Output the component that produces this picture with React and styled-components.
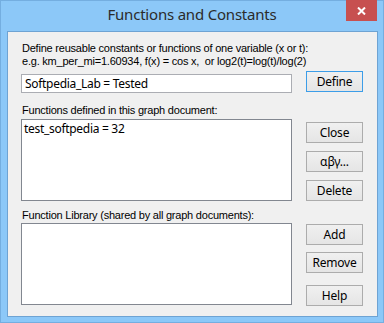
import React from 'react';
import styled, { createGlobalStyle } from 'styled-components';

const GlobalStyle = createGlobalStyle`
    html, body { margin: 0; padding: 0; background: #ffffff; }
    * { box-sizing: border-box; }
`;

const Window = styled.div`
    width: 384px;
    height: 323px;
    display: flex;
    flex-direction: column;
    background: #8cc8f8;
    box-shadow: inset 0 0 0 1px #74aee0;
    font-family: "Liberation Sans", Arial, sans-serif;
`;

const TitleBar = styled.div`
    height: 31px;
    display: grid;
    grid-template-columns: 1fr auto 1fr;
    align-items: start;
    flex-shrink: 0;
`;

const Title = styled.div`
    grid-column: 2;
    margin-top: 4px;
    font-family: "Noto Sans", "Open Sans", sans-serif;
    font-size: 15px;
    line-height: 20px;
    letter-spacing: -0.2px;
    color: #2b2b2b;
    white-space: nowrap;
`;

const CloseButton = styled.div`
    grid-column: 3;
    justify-self: end;
    width: 31px;
    height: 21px;
    margin-right: 7px;
    background: #c75050;
    display: grid;
    place-items: center;
`;

const Client = styled.div`
    flex: 1;
    margin: 0 6px 6px 7px;
    border: 1px solid #6ea3d3;
    background: #f0f0f0;
    padding: 10px 13px 0 13px;
    display: flex;
    flex-direction: column;
`;

const Label = styled.div`
    font-size: 11px;
    line-height: 13px;
    letter-spacing: -0.22px;
    color: #000;
    padding-left: 1px;
    margin-top: ${ props => props.top || 0 }px;
    white-space: nowrap;
`;

const Row = styled.div`
    display: grid;
    grid-template-columns: 271px 57px;
    column-gap: 14px;
    align-items: start;
    margin-top: ${ props => props.top || 0 }px;
`;

const Input = styled.div`
    margin-top: 3px;
    height: 19px;
    border: 1px solid #abadb3;
    background: #fff;
    padding: 0 3px;
    font-family: "Noto Sans", "Open Sans", sans-serif;
    font-size: 12px;
    line-height: 17px;
    letter-spacing: -0.3px;
    color: #000;
`;

const ListBox = styled.div`
    height: 82px;
    border: 1px solid #828790;
    background: #fff;
    padding: 1px 2px;
    font-family: "Noto Sans", "Open Sans", sans-serif;
    font-size: 12px;
    line-height: 16px;
    letter-spacing: -0.3px;
    color: #000;
`;

const ButtonColumn = styled.div`
    display: flex;
    flex-direction: column;
`;

const Button = styled.div`
    height: 21px;
    margin-top: ${ props => props.top || 0 }px;
    border: 1px solid ${ props => props.isDefault ? '#3c9de8' : '#acacac' };
    background: linear-gradient(#f0f0f0, #e5e5e5);
    display: grid;
    place-items: center;
    font-family: "Noto Sans", "Open Sans", sans-serif;
    font-size: 12px;
    line-height: 16px;
    letter-spacing: -0.2px;
    color: #000;
`;

const App = () => {
    return (
        <>
            <GlobalStyle />
            <Window>
                <TitleBar>
                    <Title>Functions and Constants</Title>
                    <CloseButton>
                        <svg width="9" height="8" viewBox="0 0 9 8">
                            <path d="M1 0.5 L8 7.5 M8 0.5 L1 7.5" stroke="#fff" strokeWidth="2" />
                        </svg>
                    </CloseButton>
                </TitleBar>
                <Client>
                    <Label>Define reusable constants or functions of one variable (x or t):</Label>
                    <Label>e.g. km_per_mi=1.60934, f(x) = cos x,&nbsp; or log2(t)=log(t)/log(2)</Label>
                    <Row top={3}>
                        <Input>Softpedia_Lab = Tested</Input>
                        <Button isDefault>Define</Button>
                    </Row>

                    <Label top={11}>Functions defined in this graph document:</Label>
                    <Row top={2}>
                        <ListBox>test_softpedia = 32</ListBox>
                        <ButtonColumn>
                            <Button top={3}>Close</Button>
                            <Button top={8}>αβγ...</Button>
                            <Button top={8}>Delete</Button>
                        </ButtonColumn>
                    </Row>

                    <Label top={8}>Function Library (shared by all graph documents):</Label>
                    <Row top={1}>
                        <ListBox />
                        <ButtonColumn>
                            <Button top={1}>Add</Button>
                            <Button top={7}>Remove</Button>
                            <Button top={12}>Help</Button>
                        </ButtonColumn>
                    </Row>
                </Client>
            </Window>
        </>
    );
};

export default App;
